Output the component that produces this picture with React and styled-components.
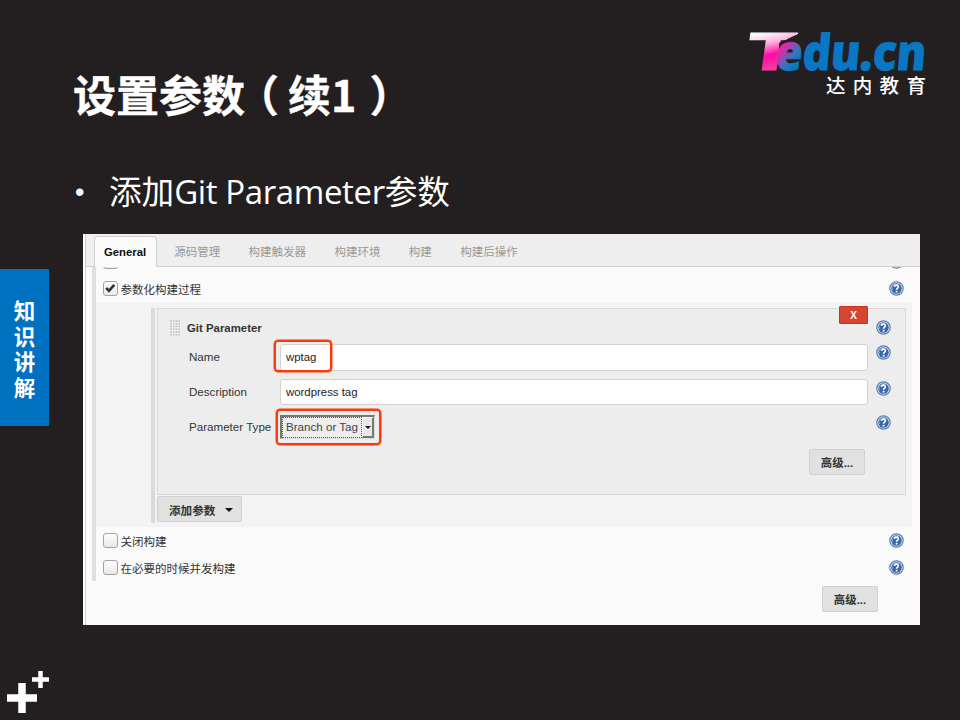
import React from "react";
import styled, { createGlobalStyle, css } from "styled-components";

const GlobalStyle = createGlobalStyle`
  * { box-sizing: border-box; }
  body { margin: 0; background: #231f20; }
`;

const uiFont = '"Liberation Sans", "Noto Sans CJK SC", sans-serif';
const slideFont = '"Open Sans", "Noto Sans CJK SC", sans-serif';

const Slide = styled.div`
  width: 960px;
  height: 720px;
  overflow: hidden;
  display: flex;
  flex-direction: column;
  background: #231f20;
  color: #fff;
  font-family: ${slideFont};
`;

const Header = styled.header`
  height: 150px;
  display: flex;
  justify-content: space-between;
  padding: 0 30px 0 73px;
`;

const Title = styled.h1`
  margin: 61px 0 0;
  font-family: "Noto Sans CJK SC", sans-serif;
  font-size: 43px;
  line-height: 64px;
  height: 64px;
  font-weight: 700;
  white-space: nowrap;
  -webkit-text-stroke: 0.4px #fff;
`;

const Paren = styled.span`
  margin: ${(p) => (p.$open ? "0 9px 0 -9px" : "0 0 0 13px")};
`;

const Brand = styled.svg`
  width: 184px;
  height: 84px;
  margin-top: 20px;
`;

const Bullet = styled.div`
  height: 84px;
  padding: 19px 0 0 75px;
  display: flex;
  font-size: 32.6px;
  line-height: 46px;
  white-space: nowrap;
`;

const BulletMark = styled.span`
  width: 34px;
  font-family: "Liberation Sans", sans-serif;
  font-size: 27px;
`;

const Latin = styled.span`
  font-size: 33px;
  letter-spacing: -0.38px;
`;

const Main = styled.main`
  height: 391px;
  display: flex;
`;

const Rail = styled.aside`
  width: 83px;
  padding-top: 35px;
`;

const ChapterTab = styled.div`
  width: 49px;
  height: 157px;
  background: #0070c0;
  display: flex;
  flex-direction: column;
  align-items: center;
  padding-top: 28px;
  font: 700 21.5px/25.5px "Noto Sans CJK SC", sans-serif;
`;

const Screen = styled.section`
  width: 837px;
  background: #fafafa;
  border-left: 2px solid #fff;
  box-shadow: inset 1px 0 #d2d2d2;
  font-family: ${uiFont};
  font-size: 11.5px;
  color: #333;
  padding-left: 1px;
`;

const TabBar = styled.nav`
  height: 33px;
  background: #eee;
  border-bottom: 1px solid #d0d0d0;
  display: flex;
  align-items: flex-end;
  padding-left: 8px;
`;

const Tab = styled.div`
  height: 30px;
  padding: 0 14.2px;
  line-height: 32px;
  color: #999;
  white-space: nowrap;
  ${(p) =>
    p.$active &&
    css`
      width: 63px;
      padding: 0 0 0 9px;
      margin: 0 3px -1px 0;
      height: 31px;
      line-height: 30px;
      font-size: 11.3px;
      font-weight: 700;
      color: #111;
      background: #fafafa;
      border: 1px solid #d0d0d0;
      border-bottom: 0;
      border-radius: 4px 4px 0 0;
    `}
`;

const Config = styled.div`
  margin-left: 6px;
  height: 314px;
  border-left: 4px solid #dfdfdf;
`;

const OptionRow = styled.div`
  height: ${(p) => (p.$clipped ? 8 : 27)}px;
  padding: 0 16.5px 0 7px;
  display: flex;
  align-items: center;
  overflow: hidden;
  ${(p) =>
    p.$clipped &&
    css`
      align-items: flex-end;
      padding-bottom: 6.4px;
    `}
`;

const OptionLabel = styled.span`
  flex: 1;
  padding-left: 3px;
  padding-top: 1px;
`;

const Box = styled.span`
  width: 14.5px;
  height: 14.5px;
  border: 1px solid #a3a3a0;
  border-radius: 3px;
  background: linear-gradient(#fdfdfd, #e9e9e7);
  display: flex;
  flex: none;
`;

const Section = styled.div`
  width: 816px;
  height: 225px;
  padding: 6px 0 0 55px;
  background: #f3f3f3;
`;

const ParamList = styled.div`
  height: 215px;
  border-left: 4px solid #dadada;
  padding-left: 2px;
`;

const ParamPanel = styled.div`
  width: 749px;
  height: 187px;
  border: 1px solid #d9d9d9;
  background: #ededed;
  padding-left: 12px;
`;

const PanelHead = styled.div`
  height: 35px;
  display: flex;
  align-items: flex-start;
`;

const Grip = styled.span`
  width: 11px;
  height: 16px;
  margin: 11px 6px 0 0;
  background: radial-gradient(circle at 1px 1px, #b9b9b9 0.6px, #f4f4f4 1px) 0 0 / 2.75px 2.75px;
`;

const PanelTitle = styled.strong`
  flex: 1;
  margin-top: 12px;
  line-height: 14px;
  font-size: 11.4px;
`;

const DeleteButton = styled.div`
  width: 29px;
  height: 18px;
  margin: -3px 8px 0 0;
  background: #d6452f;
  border: 1px solid #c9321d;
  border-radius: 1px;
  color: #fff;
  font-weight: 700;
  font-size: 10px;
  line-height: 17px;
  text-align: center;
`;

const HelpSlot = styled.span`
  display: flex;
  width: 15px;
  height: 15px;
  margin: ${(p) => p.$top || 0}px ${(p) => p.$right || 0}px 0 0;
  flex: none;
`;

const Field = styled.div`
  display: grid;
  grid-template-columns: 91px 588px 15px;
  column-gap: 0;
  padding-left: 19px;
  height: ${(p) => p.$height}px;
  margin-bottom: ${(p) => p.$gap}px;

  ${HelpSlot} {
    margin-left: 8px;
  }
`;

const FieldLabel = styled.span`
  line-height: ${(p) => p.$line}px;
  white-space: nowrap;
  font-size: 11.6px;
`;

const FieldBody = styled.div`
  position: relative;
  display: flex;
`;

const TextBox = styled.div`
  flex: 1;
  background: #fff;
  border: 1px solid #d2d2d2;
  border-radius: 3px;
  padding: 0 0 1px 5px;
  display: flex;
  align-items: center;
  color: #222;
  font-size: 11.4px;
`;

const Highlight = styled.span`
  position: absolute;
  left: ${(p) => p.$x}px;
  top: ${(p) => p.$y}px;
  width: ${(p) => p.$w}px;
  height: ${(p) => p.$h}px;
  border: 2px solid #f93b0c;
  box-shadow: 0 0 0 0.5px #f93b0c;
  border-radius: 4px;
`;

const Select = styled.div`
  width: 95px;
  height: 24px;
  border: 1px solid #999;
  border-width: 2px 1px 1px 2px;
  border-color: #777 #ddd #ddd #777;
  display: flex;
`;

const SelectValue = styled.span`
  width: 80px;
  border: 1px dotted #555;
  padding-left: 3px;
  line-height: 18px;
  color: #444;
  white-space: nowrap;
  font-size: 11.6px;
`;

const SelectArrow = styled.span`
  flex: 1;
  border: 1px solid #fff;
  border-right: 2px solid #777;
  border-bottom: 2px solid #777;
  background: #e8e8e8;
  display: flex;
  align-items: center;
  justify-content: center;
`;

const Caret = styled.span`
  border: ${(p) => p.$size}px solid transparent;
  border-top-color: #111;
  border-bottom: 0;
`;

const Button = styled.div`
  width: ${(p) => p.$width || 56}px;
  height: 26px;
  margin: ${(p) => p.$margin};
  background: #e1e1e1;
  border: 1px solid #d0d0d0;
  border-radius: 2px;
  display: flex;
  align-items: center;
  justify-content: center;
  gap: 10px;
  font-weight: 700;
  font-size: 11.4px;
  color: #333;
`;

const MenuButton = styled(Button)`
  justify-content: flex-start;
  padding: 1px 0 0 11px;
  font-size: 11.6px;
`;

const Footer = styled.footer`
  flex: 1;
  display: flex;
  align-items: flex-end;
`;

function Help() {
  return (
    <svg width="15" height="15" viewBox="0 0 15 15">
      <circle cx="7.5" cy="7.5" r="6.7" fill="#dbe5f3" stroke="#5f82b4" strokeWidth="1.2" />
      <circle cx="7.5" cy="7.5" r="5.2" fill="#3c67a6" />
      <path d="M3.6 9a4.3 4.3 0 0 1 6-5.4" fill="none" stroke="#7d9fd0" strokeWidth="1" />
      <path d="M5.6 5.8C5.7 3.6 9.5 3.6 9.4 5.8C9.3 7.1 7.6 7 7.6 8.7" fill="none" stroke="#fff" strokeWidth="1.6" />
      <rect x="6.7" y="9.8" width="1.8" height="1.7" fill="#fff" />
    </svg>
  );
}

function Check() {
  return (
    <svg width="13" height="13" viewBox="0 0 13 13">
      <path d="M2.3 5.8L5.1 9L10.7 2.8" fill="none" stroke="#263238" strokeWidth="2.7" />
    </svg>
  );
}

function Option({ label, checked }) {
  return (
    <OptionRow>
      <Box>{checked && <Check />}</Box>
      <OptionLabel>{label}</OptionLabel>
      <HelpSlot><Help /></HelpSlot>
    </OptionRow>
  );
}

function Logo() {
  return (
    <Brand viewBox="746 20 184 84">
      <defs>
        <linearGradient id="tee" gradientUnits="userSpaceOnUse" x1="5" y1="30" x2="18" y2="68">
          <stop offset="0.08" stopColor="#fff" />
          <stop offset="0.35" stopColor="#ffb5de" />
          <stop offset="0.66" stopColor="#ff0aa5" />
          <stop offset="1" stopColor="#f53c9c" />
        </linearGradient>
        <linearGradient id="ee" gradientUnits="userSpaceOnUse" x1="780" y1="47" x2="798" y2="60">
          <stop offset="0" stopColor="#f51fa0" />
          <stop offset="0.65" stopColor="#3974bd" />
          <stop offset="1" stopColor="#0878c4" />
        </linearGradient>
        <clipPath id="wedge">
          <path d="M746 28H802L800 33L779 43V74H746Z" />
        </clipPath>
      </defs>
      <g clipPath="url(#wedge)">
        <g fill="url(#tee)" stroke="url(#tee)" strokeWidth="1.2" fontFamily="Open Sans" fontWeight="700">
          <text y="69.8" fontSize="51.5" transform="translate(754.4 0) skewX(-8) scale(1.65 1)">T</text>
        </g>
      </g>
      <g fontFamily="Open Sans" fontWeight="800" fontSize="49.5" transform="translate(6 0) skewX(-5)" stroke="url(#ee)" strokeWidth="0.9">
        <text x="774.5" y="70" fill="url(#ee)" textLength="150.5" lengthAdjust="spacingAndGlyphs">edu.cn</text>
      </g>
      <text x="826" y="93" fill="#fff" fontFamily="Noto Sans CJK SC" fontWeight="500" fontSize="19.5" letterSpacing="7.3">达内教育</text>
    </Brand>
  );
}

export default function App() {
  return (
    <Slide>
      <GlobalStyle />
      <Header>
        <Title>设置参数<Paren $open>（</Paren>续1<Paren>）</Paren></Title>
        <Logo />
      </Header>
      <Bullet>
        <BulletMark>•</BulletMark>
        <span>添加<Latin>Git Parameter</Latin>参数</span>
      </Bullet>
      <Main>
        <Rail>
          <ChapterTab>
            {["知", "识", "讲", "解"].map((c) => <span key={c}>{c}</span>)}
          </ChapterTab>
        </Rail>
        <Screen>
          <TabBar>
            <Tab $active>General</Tab>
            {["源码管理", "构建触发器", "构建环境", "构建", "构建后操作"].map((t) => (
              <Tab key={t}>{t}</Tab>
            ))}
          </TabBar>
          <Config>
            <OptionRow $clipped>
              <Box />
              <OptionLabel />
              <HelpSlot><Help /></HelpSlot>
            </OptionRow>
            <Option label="参数化构建过程" checked />
            <Section>
              <ParamList>
                <ParamPanel>
                  <PanelHead>
                    <Grip />
                    <PanelTitle>Git Parameter</PanelTitle>
                    <DeleteButton>X</DeleteButton>
                    <HelpSlot $top={11} $right={14}><Help /></HelpSlot>
                  </PanelHead>
                  <Field $height={27} $gap={8}>
                    <FieldLabel $line={25}>Name</FieldLabel>
                    <FieldBody>
                      <TextBox>wptag</TextBox>
                      <Highlight $x={-6} $y={-4} $w={58} $h={32} />
                    </FieldBody>
                    <HelpSlot $top={1}><Help /></HelpSlot>
                  </Field>
                  <Field $height={26} $gap={10}>
                    <FieldLabel $line={26}>Description</FieldLabel>
                    <FieldBody><TextBox>wordpress tag</TextBox></FieldBody>
                    <HelpSlot $top={2}><Help /></HelpSlot>
                  </Field>
                  <Field $height={24} $gap={10}>
                    <FieldLabel $line={23}>Parameter Type</FieldLabel>
                    <FieldBody>
                      <Select>
                        <SelectValue>Branch or Tag</SelectValue>
                        <SelectArrow><Caret $size={3} /></SelectArrow>
                      </Select>
                      <Highlight $x={-4} $y={-6} $w={105} $h={36} />
                    </FieldBody>
                    <HelpSlot><Help /></HelpSlot>
                  </Field>
                  <Button $margin="0 0 0 639px">高级...</Button>
                </ParamPanel>
                <MenuButton $width={85} $margin="1px 0 0">添加参数<Caret $size={4} /></MenuButton>
              </ParamList>
            </Section>
            <Option label="关闭构建" />
            <Option label="在必要的时候并发构建" />
          </Config>
          <Button $margin="5px 0 0 736px">高级...</Button>
        </Screen>
      </Main>
      <Footer>
        <svg width="60" height="60" viewBox="0 660 60 60">
          <path d="M22 683v30M7 698h30" stroke="#fff" strokeWidth="7.5" />
          <path d="M40.5 671v17M32 679.5h17" stroke="#fff" strokeWidth="4.5" />
        </svg>
      </Footer>
    </Slide>
  );
}
